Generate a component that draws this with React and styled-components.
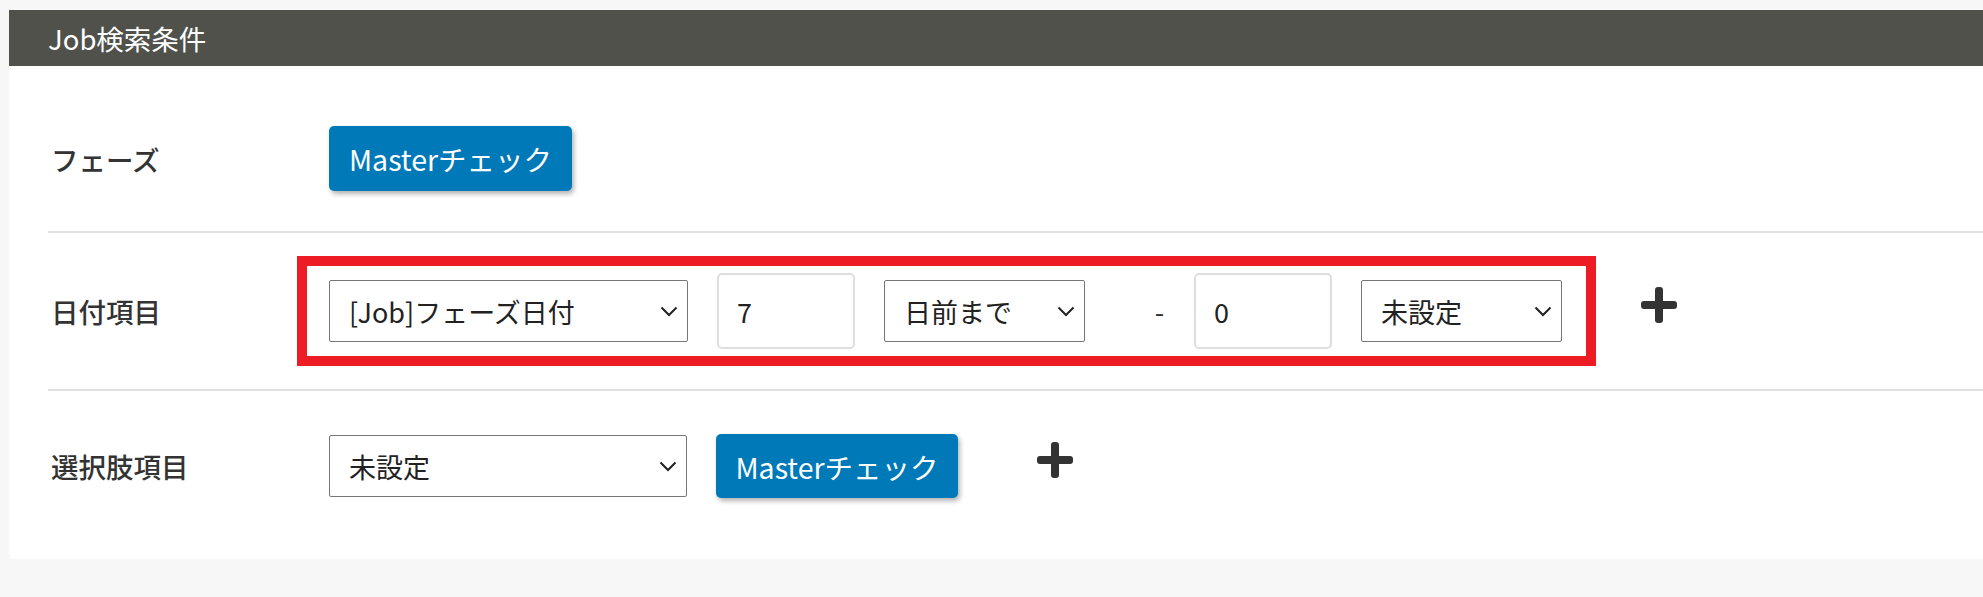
import React from "react";
import styled, { createGlobalStyle } from "styled-components";

const GlobalStyle = createGlobalStyle`
  html, body {
    margin: 0;
    padding: 0;
    background: #f7f7f7;
    font-family: "Noto Sans CJK JP", "Noto Sans", sans-serif;
    color: #333;
  }
  * {
    box-sizing: border-box;
  }
`;

function Chevron() {
  return (
    <ChevronIcon width="18" height="11" viewBox="0 0 18 11">
      <path d="M1.5 1.5 L9 9 L16.5 1.5" fill="none" stroke="#222" strokeWidth="2" />
    </ChevronIcon>
  );
}

function PlusIcon() {
  return (
    <PlusButton type="button" aria-label="追加">
      <svg width="36" height="36" viewBox="0 0 36 36">
        <rect x="14" y="0" width="8" height="36" rx="3" fill="#333" />
        <rect x="0" y="14" width="36" height="8" rx="3" fill="#333" />
      </svg>
    </PlusButton>
  );
}

function Select({ width, value, options }) {
  return (
    <SelectWrap $width={width}>
      <StyledSelect defaultValue={value}>
        {options.map(o => (
          <option key={o}>{o}</option>
        ))}
      </StyledSelect>
      <Chevron />
    </SelectWrap>
  );
}

export default function App() {
  return (
    <>
      <GlobalStyle />
      <Page>
        <Card>
          <Header>Job検索条件</Header>
          <Body>
            <Row>
              <Label>フェーズ</Label>
              <Controls>
                <MasterButton type="button">Masterチェック</MasterButton>
              </Controls>
            </Row>

            <Row>
              <Label>日付項目</Label>
              <Controls>
                <Highlight>
                  <Select width={359} value="[Job]フェーズ日付" options={["未設定", "[Job]フェーズ日付"]} />
                  <NumberInput defaultValue="7" />
                  <Select width={201} value="日前まで" options={["日前まで", "日後まで"]} />
                  <Dash>-</Dash>
                  <NumberInput defaultValue="0" />
                  <Select width={201} value="未設定" options={["未設定", "日前まで", "日後まで"]} />
                </Highlight>
                <PlusIcon />
              </Controls>
            </Row>

            <Row $last>
              <Label>選択肢項目</Label>
              <Controls>
                <Select width={358} value="未設定" options={["未設定"]} />
                <MasterButton type="button" $small>
                  Masterチェック
                </MasterButton>
                <PlusIcon />
              </Controls>
            </Row>
          </Body>
        </Card>
      </Page>
    </>
  );
}

const Page = styled.div`
  padding: 10px 0 37px 9px;
`;

const Card = styled.div`
  background: #fff;
  border-radius: 0 0 0 6px;
  overflow: hidden;
`;

const Header = styled.div`
  height: 56px;
  background: #50514b;
  color: #fff;
  font-size: 27.5px;
  display: flex;
  align-items: center;
  padding-left: 39px;
`;

const Body = styled.div`
  padding: 20px 0 20px 39px;
`;

const Row = styled.div`
  display: flex;
  align-items: center;
  padding: ${p => (p.$last ? "43px 0 41px" : "40px 0")};
  border-bottom: ${p => (p.$last ? "none" : "2px solid #e0e0e0")};
`;

const Label = styled.div`
  width: 281px;
  flex-shrink: 0;
  font-size: 27.5px;
  font-weight: 500;
  color: #333;
  padding-left: 3px;
`;

const Controls = styled.div`
  display: flex;
  align-items: center;
  gap: 29px;
`;

const Highlight = styled.div`
  position: relative;
  display: flex;
  align-items: center;
  gap: 29px;

  &::after {
    content: "";
    position: absolute;
    top: -17px;
    bottom: -17px;
    left: -32px;
    right: -34px;
    border: 10px solid #ed1c24;
    pointer-events: none;
  }
`;

const MasterButton = styled.button`
  width: ${p => (p.$small ? "242px" : "243px")};
  height: ${p => (p.$small ? "64px" : "65px")};
  background: #0079b8;
  color: #fff;
  border: none;
  border-radius: 5px;
  box-shadow: 2px 3px 5px rgba(0, 0, 0, 0.3);
  font-family: inherit;
  font-size: 28.5px;
  padding: 0;
  cursor: pointer;
`;

const SelectWrap = styled.div`
  position: relative;
  width: ${p => p.$width}px;
  height: 62px;
  flex-shrink: 0;
`;

const StyledSelect = styled.select`
  appearance: none;
  width: 100%;
  height: 100%;
  border: 1px solid #767676;
  border-radius: 2px;
  background: #fff;
  padding: 0 40px 0 19px;
  font-family: inherit;
  font-size: 27px;
  color: #222;
  outline: none;
`;

const ChevronIcon = styled.svg`
  position: absolute;
  right: 10px;
  top: 26px;
  pointer-events: none;
`;

const NumberInput = styled.input`
  width: 138px;
  height: 76px;
  border: 2px solid #dedede;
  border-radius: 5px;
  padding: 0 0 0 18px;
  font-family: inherit;
  font-size: 27px;
  color: #222;
  outline: none;
  flex-shrink: 0;
`;

const Dash = styled.span`
  width: 51px;
  text-align: right;
  font-size: 27px;
  color: #333;
  padding-right: 1px;
`;

const PlusButton = styled.button`
  display: flex;
  align-items: center;
  justify-content: center;
  background: none;
  border: none;
  padding: 0;
  margin-left: 50px;
  cursor: pointer;
  margin-top: -12px;
`;
